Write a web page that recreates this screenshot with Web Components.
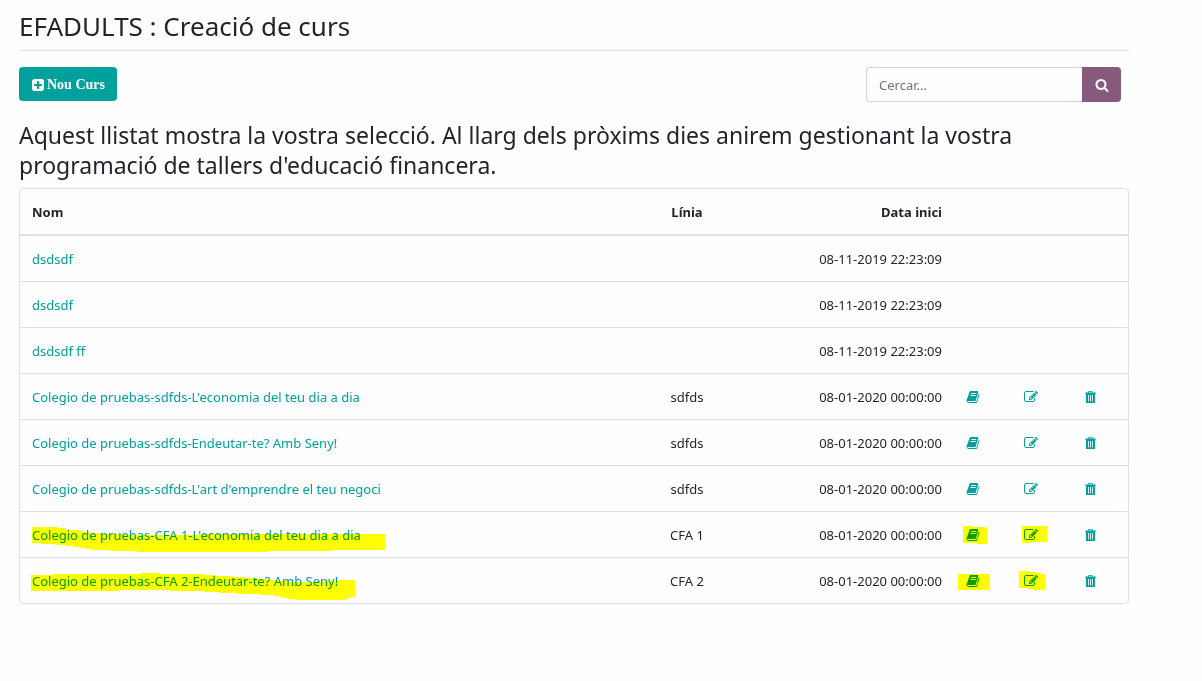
<!DOCTYPE html>
<html lang="ca">
<head>
<meta charset="utf-8">
<title>EFADULTS : Creació de curs</title>
<style>
body { margin: 0; background: #fefefe; color: #212529; font: 13px/22px "Noto Sans", "Open Sans", sans-serif; }
</style>
</head>
<body>
<course-page>
  <page-title slot="title">EFADULTS : Creació de curs</page-title>
  <new-course-button slot="tools">Nou Curs</new-course-button>
  <search-box slot="tools" placeholder="Cercar..."></search-box>
  <span slot="intro">Aquest llistat mostra la vostra selecció. Al llarg dels pròxims dies anirem gestionant la vostra programació de tallers d'educació financera.</span>
  <course-table></course-table>
</course-page>
<script>
const ICONS = {
  plus: "M1408 960v-128q0-26-19-45t-45-19h-320v-320q0-26-19-45t-45-19h-128q-26 0-45 19t-19 45v320h-320q-26 0-45 19t-19 45v128q0 26 19 45t45 19h320v320q0 26 19 45t45 19h128q26 0 45-19t19-45v-320h320q26 0 45-19t19-45zm256-544v960q0 119-84.5 203.5t-203.5 84.5h-960q-119 0-203.5-84.5t-84.5-203.5v-960q0-119 84.5-203.5t203.5-84.5h960q119 0 203.5 84.5t84.5 203.5z",
  search: "M1216 832q0-185-131.5-316.5t-316.5-131.5-316.5 131.5-131.5 316.5 131.5 316.5 316.5 131.5 316.5-131.5 131.5-316.5zm512 832q0 52-38 90t-90 38q-54 0-90-38l-343-342q-179 124-399 124-143 0-273.5-55.5t-225-150-150-225-55.5-273.5 55.5-273.5 150-225 225-150 273.5-55.5 273.5 55.5 225 150 150 225 55.5 273.5q0 220-124 399l343 343q37 37 37 90z",
  book: "M1703 478q40 57 18 129l-275 906q-19 64-76.5 107.5t-122.5 43.5h-923q-77 0-148.5-53.5t-99.5-131.5q-24-67-2-127 0-4 3-27t4-37q1-8-3-21.5t-3-19.5q2-11 8-21t16.5-23.5 16.5-23.5q23-38 45-91.5t30-91.5q3-10 .5-30t-.5-28q3-11 17-28t17-23q21-36 42-92t25-90q1-9-2.5-32t.5-28q4-13 22-30.5t22-22.5q19-26 42.5-84.5t27.5-96.5q1-8-3-25.5t-2-26.5q2-8 9-18t18-23 17-21q8-12 16.5-30.5t15-35 16-36 19.5-32 26.5-23.5 36-11.5 47.5 5.5l-1 3q38-9 51-9h761q74 0 114 56t18 130l-274 906q-36 119-71.5 153.5t-128.5 34.5h-869q-27 0-38 15-11 16-1 43 24 70 144 70h923q29 0 56-15.5t35-41.5l300-987q7-22 5-57 38 15 59 43zm-1064 2q-4 13 2 22.5t20 9.5h608q13 0 25.5-9.5t16.5-22.5l21-64q4-13-2-22.5t-20-9.5h-608q-13 0-25.5 9.5t-16.5 22.5zm-83 256q-4 13 2 22.5t20 9.5h608q13 0 25.5-9.5t16.5-22.5l21-64q4-13-2-22.5t-20-9.5h-608q-13 0-25.5 9.5t-16.5 22.5z",
  edit: "M888 1184l116-116-152-152-116 116v56h96v96h56zm440-720q-16-16-33 1l-350 350q-17 17-1 33t33-1l350-350q17-17 1-33zm80 594v190q0 119-84.5 203.5t-203.5 84.5h-832q-119 0-203.5-84.5t-84.5-203.5v-832q0-119 84.5-203.5t203.5-84.5h832q63 0 117 25 15 7 18 23 3 17-9 29l-49 49q-14 14-32 8-23-6-45-6h-832q-66 0-113 47t-47 113v832q0 66 47 113t113 47h832q66 0 113-47t47-113v-126q0-13 9-22l64-64q15-15 35-7t20 29zm-96-738l288 288-672 672h-288v-288zm444 132l-92 92-288-288 92-92q28-28 68-28t68 28l152 152q28 28 28 68t-28 68z",
  trash: "M832 128h512l64 192h384v128h-128v1152q0 64-64 64h-1024q-64 0-64-64v-1152h-128v-128h384zm60 100l-30 92h452l-30-92zm-124 412v832h104v-832zm268 0v832h104v-832zm268 0v832h104v-832z"
};

class BaseElement extends HTMLElement {
  constructor() {
    super();
    this.attachShadow({ mode: "open" });
  }
  connectedCallback() { this.shadowRoot.innerHTML = this.render(); }
}

customElements.define("app-icon", class extends BaseElement {
  render() {
    return `<style>
      :host { display: block; width: 14px; height: 14px; flex: none; }
      svg { display: block; width: 100%; height: 100%; fill: currentColor; fill-rule: evenodd; }
    </style><svg viewBox="0 0 1792 1792" aria-hidden="true"><path d="${ICONS[this.getAttribute("name")]}"/></svg>`;
  }
});

/* Highlighter stroke laid over the content it marks. */
customElements.define("marker-stroke", class extends BaseElement {
  render() {
    return `<style>
      :host { position: absolute; top: 0; left: 0; pointer-events: none; mix-blend-mode: multiply; }
      svg { display: block; width: 14px; height: 21px; overflow: visible; fill: #ff0; }
    </style><svg aria-hidden="true" shape-rendering="crispEdges"><polygon points="${this.getAttribute("points")}"/></svg>`;
  }
});

customElements.define("page-title", class extends BaseElement {
  render() {
    return `<style>
      :host { display: block; border-bottom: 1px solid #dee2e6; }
      h1 { margin: 0; padding: 10px 0 8px; font-size: 26px; line-height: 32px; font-weight: 400; }
    </style><h1><slot></slot></h1>`;
  }
});

customElements.define("new-course-button", class extends BaseElement {
  render() {
    return `<style>
      :host { display: block; }
      button { display: flex; align-items: center; gap: 2px; height: 34px; padding: 2px 12px 0; border: 0; border-radius: 4px;
        background: #00a09d; color: #fff; font: 700 14px/22px "Liberation Serif", "Times New Roman", serif; }
    </style><button type="button"><app-icon name="plus"></app-icon><span><slot></slot></span></button>`;
  }
});

customElements.define("search-box", class extends BaseElement {
  render() {
    const label = this.getAttribute("placeholder");
    return `<style>
      :host { display: block; width: 255px; }
      form { display: flex; height: 35px; margin: 0; }
      input { flex: 1; min-width: 0; box-sizing: border-box; padding: 1px 12px 0; border: 1px solid #ced4da; border-right: 0;
        border-radius: 4px 0 0 4px; background: #fefefe; color: #495057; font: inherit; }
      input::placeholder { color: #6c757d; opacity: 1; }
      button { display: flex; align-items: center; justify-content: center; width: 39px; padding: 0; border: 0;
        border-radius: 0 4px 4px 0; background: #875a7b; color: #fff; }
    </style><form role="search"><input type="text" placeholder="${label}" aria-label="${label}"><button type="button" aria-label="Cercar"><app-icon name="search"></app-icon></button></form>`;
  }
});

const COURSES = [
  { name: "dsdsdf", date: "08-11-2019 22:23:09" },
  { name: "dsdsdf", date: "08-11-2019 22:23:09" },
  { name: "dsdsdf ff", date: "08-11-2019 22:23:09" },
  { name: "Colegio de pruebas-sdfds-L'economia del teu dia a dia", line: "sdfds", date: "08-01-2020 00:00:00" },
  { name: "Colegio de pruebas-sdfds-Endeutar-te? Amb Seny!", line: "sdfds", date: "08-01-2020 00:00:00" },
  { name: "Colegio de pruebas-sdfds-L'art d'emprendre el teu negoci", line: "sdfds", date: "08-01-2020 00:00:00" },
  { name: "Colegio de pruebas-CFA 1-L'economia del teu dia a dia", line: "CFA 1", date: "08-01-2020 00:00:00",
    marks: {
      name: "0,3 26,3 26,4 34,4 34,6 46,6 53,8 62,9 73,10 108,11 168,11 168,10 353,10 353,26 301,26 301,27 235,27 235,28 105,28 105,27 78,27 78,26 64,26 55,25 45,23 38,22 28,21 18,20 0,19",
      book: "-3,2 8,2 8,3 19,3 19,4 21,4 21,20 11,20 11,19 -3,19",
      edit: "-2,2 23,2 23,18 7,18 7,19 -2,19"
    } },
  { name: "Colegio de pruebas-CFA 2-Endeutar-te? Amb Seny!", line: "CFA 2", date: "08-01-2020 00:00:00",
    marks: {
      name: "-1,5 21,5 21,4 110,4 110,3 127,3 127,4 172,4 172,5 193,6 205,7 220,8 240,10 260,12 286,12 300,11 313,10 323,10 323,27 317,28 311,30 268,30 258,29 249,27 239,25 218,24 193,23 180,22 163,21 138,21 138,20 88,20 88,21 -1,21",
      book: "-8,4 24,4 24,20 -8,20",
      edit: "-5,1 5,1 5,2 13,2 13,3 17,3 17,4 21,4 21,20 10,20 10,19 3,19 3,18 -5,18"
    } }
];

customElements.define("course-table", class extends BaseElement {
  mark(course, key) {
    const points = course.marks && course.marks[key];
    return points ? `<marker-stroke points="${points}"></marker-stroke>` : "";
  }
  action(course, icon, label) {
    return course.line
      ? `<td><a class="icon" href="#" aria-label="${label}"><app-icon name="${icon}"></app-icon>${this.mark(course, icon)}</a></td>`
      : "<td></td>";
  }
  row(c) {
    return `<tr><td><a href="#">${c.name}${this.mark(c, "name")}</a></td><td class="line">${c.line || ""}</td><td class="date">${c.date}</td>${this.action(c, "book", "Detall")}${this.action(c, "edit", "Editar")}${this.action(c, "trash", "Esborrar")}</tr>`;
  }
  render() {
    return `<style>
      :host { display: block; border: 1px solid #dee2e6; border-radius: 4px; }
      table { width: 100%; border-collapse: separate; border-spacing: 0; table-layout: fixed; }
      th, td { height: 22px; padding: 12px 12px 11px; text-align: left; vertical-align: top; }
      th { font-weight: 700; border-bottom: 2px solid #dee2e6; }
      tr + tr td { border-top: 1px solid #dee2e6; }
      .c-line { width: 230px; } .c-date { width: 152px; } .c-action { width: 58px; }
      .line { text-align: center; }
      .date { text-align: right; white-space: nowrap; }
      a { position: relative; display: inline-block; vertical-align: top; color: #00a09d; text-decoration: none; }
      .icon { display: flex; align-items: center; width: 14px; height: 21px; }
    </style>
    <table>
      <colgroup><col><col class="c-line"><col class="c-date"><col class="c-action"><col class="c-action"><col class="c-action"></colgroup>
      <thead><tr><th>Nom</th><th class="line">Línia</th><th class="date">Data inici</th><th></th><th></th><th></th></tr></thead>
      <tbody>${COURSES.map(c => this.row(c)).join("")}</tbody>
    </table>`;
  }
});

customElements.define("course-page", class extends BaseElement {
  render() {
    return `<style>
      :host { display: block; padding: 0 73px 24px 19px; }
      .tools { display: flex; justify-content: space-between; align-items: flex-start; padding: 16px 8px 18px 0; }
      h2 { margin: 0 0 8px; font-size: 23px; line-height: 30px; font-weight: 400; }
    </style>
    <slot name="title"></slot>
    <div class="tools"><slot name="tools"></slot></div>
    <h2><slot name="intro"></slot></h2>
    <slot></slot>`;
  }
});
</script>
</body>
</html>
